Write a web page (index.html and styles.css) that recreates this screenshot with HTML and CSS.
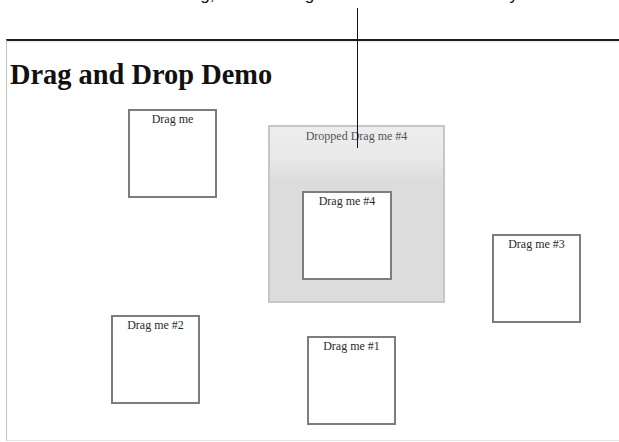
FILE: index.html
```html
<!DOCTYPE html>
<html lang="en">
<head>
  <meta charset="UTF-8">
  <title>Drag and Drop Demo</title>
  <link rel="stylesheet" href="styles.css">
</head>
<body>
  <div class="caption"><span class="caption-text">While the item is in drag, then as drag it rests in the zone entirely</span></div>

  <div class="frame">
    <h1>Drag and Drop Demo</h1>

    <div class="box" style="left:121px; top:68px;">Drag me</div>

    <div class="dropzone" style="left:261px; top:84px;">
      <div class="dropzone-label">Dropped Drag me #4</div>
      <div class="box box-dropped">Drag me #4</div>
    </div>

    <div class="box" style="left:485px; top:193px;">Drag me #3</div>
    <div class="box" style="left:104px; top:274px;">Drag me #2</div>
    <div class="box" style="left:300px; top:295px;">Drag me #1</div>
  </div>

  <div class="callout"></div>
</body>
</html>
```

FILE: styles.css
```css
* {
  box-sizing: border-box;
}

body {
  margin: 0;
  width: 619px;
  height: 442px;
  overflow: hidden;
  background: #fff;
  font-family: 'Liberation Serif', 'Times New Roman', serif;
  position: relative;
}

/* caption of the figure above, cut off: only descenders show */
.caption {
  height: 8px;
  overflow: hidden;
  font-family: 'Liberation Sans', Arial, sans-serif;
  font-size: 17px;
  line-height: 17px;
  color: #111;
  padding-left: 27px;
  white-space: nowrap;
}

.caption-text {
  display: block;
  margin-top: -14px;
  letter-spacing: 0.05px;
}

.frame {
  position: relative;
  margin: 31px 0 0 6px;
  height: 402px;
  border-top: 2px solid #1e1e1e;
  border-left: 1px solid #c4c4c4;
  border-bottom: 1px solid #e2e2e2;
  box-shadow: inset 0 2px 2px -1px #e6e6e6;
}

h1 {
  margin: 0;
  padding: 18px 0 0 3px;
  font-size: 28.4px;
  line-height: 32px;
  font-weight: bold;
  color: #111;
}

.box {
  position: absolute;
  width: 89px;
  height: 89px;
  background: #fff;
  border: 2px solid #7d7d7d;
  padding-top: 1px;
  text-align: center;
  font-size: 12px;
  line-height: 14px;
  color: #2a2a2a;
}

.dropzone {
  position: absolute;
  width: 177px;
  height: 178px;
  border: 2px solid #c6c6c6;
  background: linear-gradient(#ededed 0, #e9e9e9 30px, #dcdcdc 55px, #dcdcdc 100%);
  padding-top: 2px;
}

.dropzone-label {
  text-align: center;
  font-size: 12px;
  line-height: 14px;
  color: #555;
}

.box-dropped {
  position: static;
  width: 90px;
  margin: 48px 0 0 32px;
}

.callout {
  position: absolute;
  left: 357px;
  top: 8px;
  width: 1px;
  height: 140px;
  background: #111;
}
```
